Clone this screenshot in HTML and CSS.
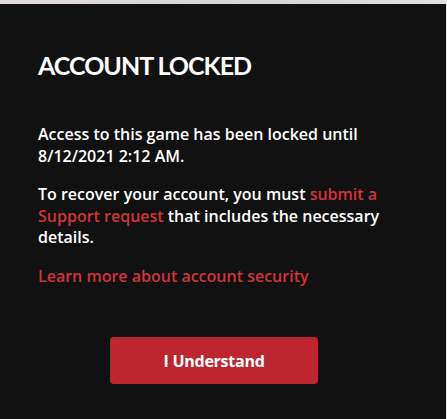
FILE: index.html
```html
<!DOCTYPE html>
<html lang="en">
<head>
<meta charset="utf-8">
<title>Account Locked</title>
<link rel="stylesheet" href="styles.css">
</head>
<body>
<div class="backdrop">
  <section class="modal">
    <h1 class="title">ACCOUNT LOCKED</h1>
    <p class="text">Access to this game has been locked until 8/12/2021 2:12 AM.</p>
    <p class="text">To recover your account, you must <a class="link" href="#">submit a Support request</a> that includes the necessary details.</p>
    <p class="text"><a class="link" href="#">Learn more about account security</a></p>
    <div class="actions">
      <button class="btn" type="button">I Understand</button>
    </div>
  </section>
</div>
</body>
</html>
```
FILE: styles.css
```css
html, body {
  margin: 0;
  padding: 0;
  background: #dcd8d8;
}
body {
  width: 447px;
  height: 419px;
  overflow: hidden;
  font-family: "Open Sans", "Liberation Sans", sans-serif;
}
.backdrop {
  padding-top: 4px;
  padding-right: 1px;
  background: linear-gradient(90deg, #e3dcdc 0%, #d9d6d6 60%, #dfe3e3 100%);
  height: 415px;
}
.modal {
  background: #111111;
  height: 415px;
  box-sizing: border-box;
  padding: 46px 38px 0 38px;
  color: #ffffff;
}
.title {
  margin: 0 0 44px;
  font-family: Lato, "Liberation Sans", sans-serif;
  font-size: 25px;
  line-height: 30px;
  font-weight: 700;
  letter-spacing: -1px;
}
.text {
  margin: 0 0 17px;
  font-size: 16px;
  line-height: 21.5px;
  font-weight: 600;
}
.link {
  color: #d1343b;
  text-decoration: none;
}
.actions {
  display: flex;
  justify-content: center;
  padding-right: 18px;
  margin-top: 50px;
}
.btn {
  width: 208px;
  height: 47px;
  border: 0;
  border-radius: 4px;
  background: #bd262e;
  color: #ffffff;
  font-family: inherit;
  font-size: 16px;
  font-weight: 700;
  letter-spacing: -0.25px;
}
```
